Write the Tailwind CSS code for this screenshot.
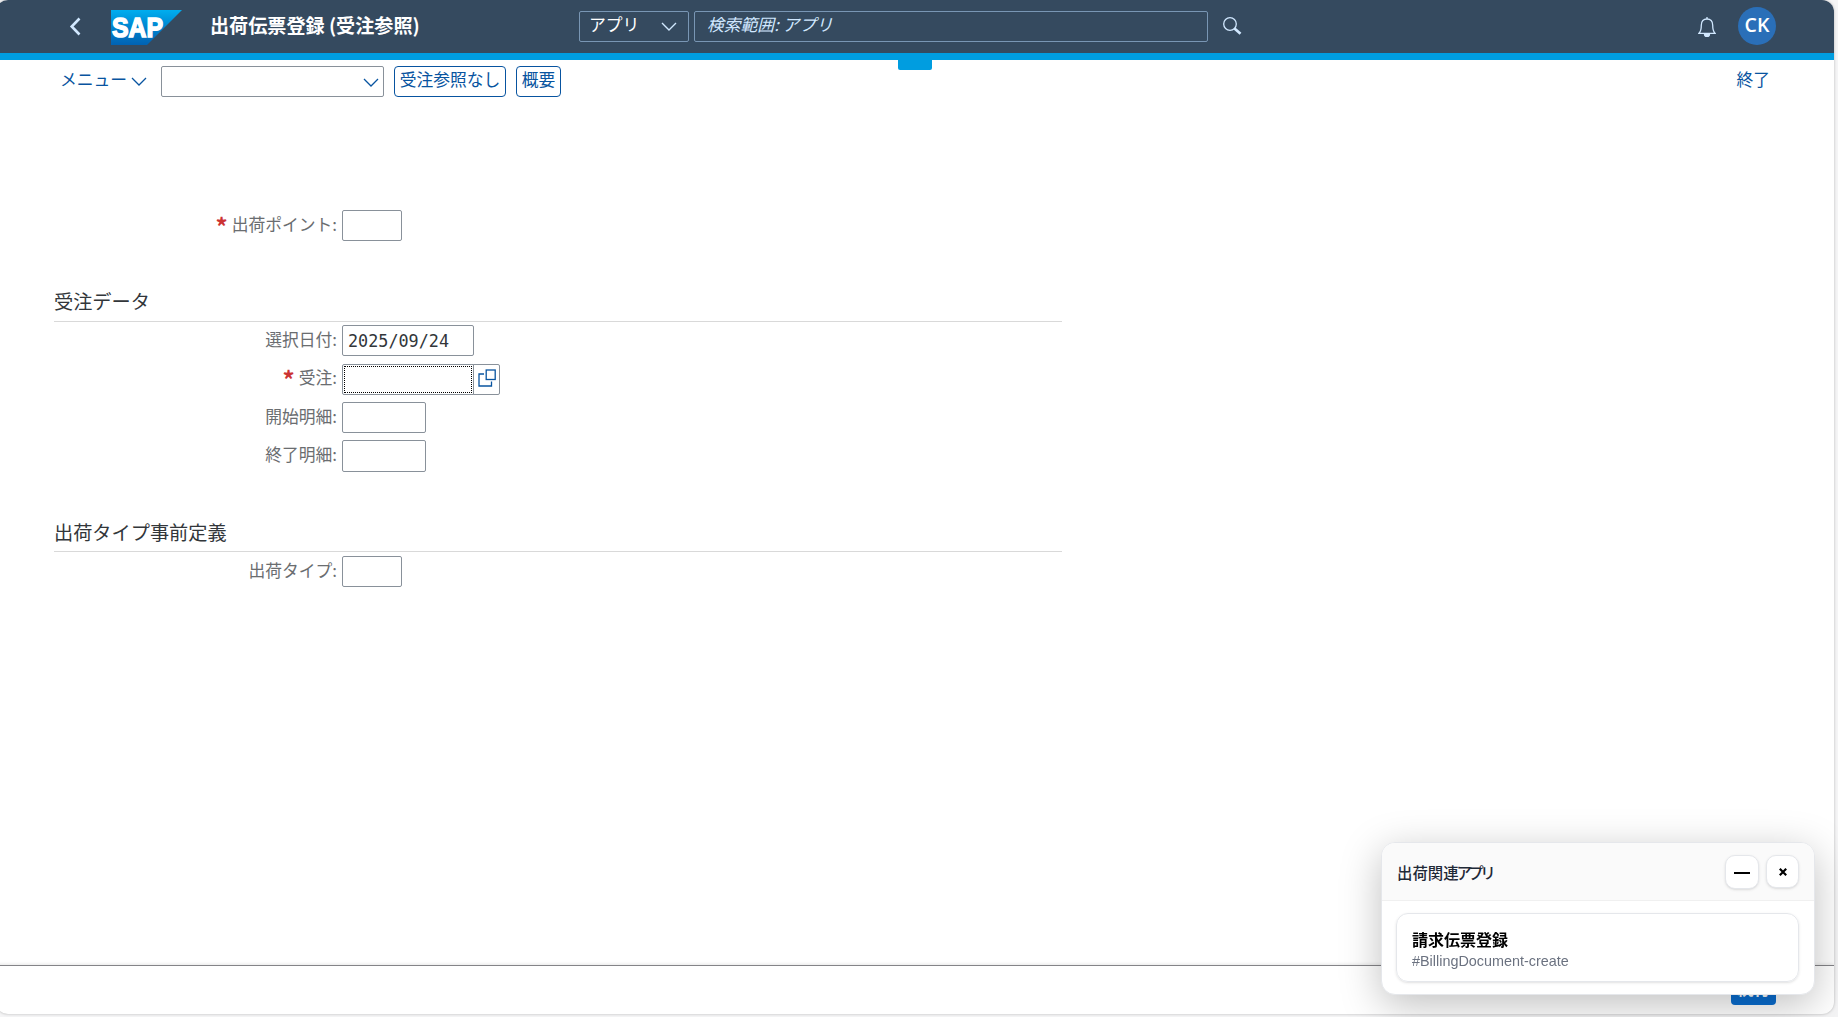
<!DOCTYPE html>
<html lang="ja">
<head>
<meta charset="utf-8">
<title>出荷伝票登録 (受注参照)</title>
<script src="https://cdn.jsdelivr.net/npm/@tailwindcss/browser@4"></script>
</head>
<body class="h-[1017px] overflow-hidden bg-[#f5f5f6] font-['Noto_Sans_CJK_JP',sans-serif] text-[16.8px] leading-6 text-[#32363a]">
<div class="-ml-[4px] flex h-[1014px] w-[1838px] flex-col overflow-hidden rounded-xl bg-white shadow-[0_0_3px_rgba(0,0,0,0.25)]">

  <header class="flex h-[60px] shrink-0 items-start border-b-[7px] border-[#009de0] bg-[#354a5f] pl-[73px] pr-[58px]">
    <svg class="mt-[17px] h-[19px] w-[13px]" viewBox="0 0 13 19" fill="none" stroke="#d1e8ff" stroke-width="2.6"><path d="M10.500 1.500 2.700 9.500l7.800 8"/></svg>
    <svg class="ml-[29px] mt-[10px] h-[35px] w-[71px]" viewBox="0 0 71 35">
      <defs><linearGradient id="g" x1="0" y1="0" x2="0" y2="1"><stop offset="0" stop-color="#00aeef"/><stop offset="0.5" stop-color="#0084cf"/><stop offset="1" stop-color="#0062b3"/></linearGradient></defs>
      <path fill="url(#g)" d="M0 0h71L36 35H0z"/>
      <text x="1" y="27" textLength="51" lengthAdjust="spacingAndGlyphs" font-family="Liberation Sans" font-weight="700" font-size="28" fill="#fff" stroke="#fff" stroke-width="1.600">SAP</text>
    </svg>
    <h1 class="ml-[28px] mt-[13px] w-[369px] whitespace-nowrap text-[19.1px] font-bold leading-6 text-white">出荷伝票登録 (受注参照)</h1>
    <div class="mt-[11px] flex h-[31px] w-[110px] items-start justify-between rounded-[2px] border border-[#7996b4] pl-[9px] pr-[11px] text-white">
      <span>アプリ</span>
      <svg class="mt-[10px] h-[10px] w-[16px]" viewBox="0 0 16 10" fill="none" stroke="#d1e8ff" stroke-width="1.4"><path d="m1 1 7 7 7-7"/></svg>
    </div>
    <div class="ml-[5px] mt-[11px] h-[31px] w-[514px] rounded-[2px] border border-[#7996b4] pl-[12px] italic text-[#d1e8ff]">検索範囲: アプリ</div>
    <svg class="ml-[15px] mt-[17px] h-[18px] w-[19px]" viewBox="0 0 19 18" fill="none" stroke="#d1e8ff"><circle cx="7" cy="7" r="6.300" stroke-width="1.3"/><path d="m11.500 11.500 6 5.300" stroke-width="2.700"/></svg>
    <svg class="ml-auto mt-[17px] h-[20px] w-[18px]" viewBox="0 0 18 20" fill="none" stroke="#d1e8ff" stroke-width="1.3"><path d="M1 16.300c2-2 2.300-4 2.300-8C3.300 4 5.500 2 9 2s5.700 2 5.700 6.300c0 4 .3 6 2.300 8z"/><path d="M9 0v2"/><path d="M6.500 17.300a2.500 2.300 0 0 0 5 0z" fill="#d1e8ff"/></svg>
    <div class="ml-[22px] mt-[7px] flex size-[38px] items-center justify-center rounded-full bg-[#2a6fb8] pb-[2px] font-['Open_Sans',sans-serif] text-[19.5px] font-semibold text-white">CK</div>
  </header>

  <div class="flex h-[37px] shrink-0 items-start pl-[64px] pr-[64px] text-[#0854a0]">
    <span class="mt-[7px] w-[67px] whitespace-nowrap">メニュー</span>
    <svg class="ml-[4px] mt-[17px] h-[9px] w-[16px]" viewBox="0 0 16 9" fill="none" stroke="currentColor" stroke-width="1.3"><path d="m1 1 7 7 7-7"/></svg>
    <div class="ml-[14px] mt-[6px] flex h-[31px] w-[223px] justify-end rounded-[2px] border border-[#89919a] pr-[4px] pt-[11px]">
      <svg class="h-[10px] w-[16px]" viewBox="0 0 16 10" fill="none" stroke="currentColor" stroke-width="1.3"><path d="m1 1 7 7 7-7"/></svg>
    </div>
    <button class="ml-[10px] mt-[6px] flex h-[31px] w-[112px] justify-center whitespace-nowrap rounded-[4px] border border-[#0854a0] leading-6">受注参照なし</button>
    <button class="ml-[10px] mt-[6px] flex h-[31px] w-[45px] justify-center whitespace-nowrap rounded-[4px] border border-[#0854a0] leading-6">概要</button>
    <div class="ml-[337px] h-[10px] w-[34px] rounded-b-[2px] bg-[#009de0]"></div>
    <span class="ml-auto mt-[7px]">終了</span>
  </div>

  <main class="flex w-[1066px] grow flex-col pl-[58px] text-[#6a6d70]">
    <div class="mt-[113px] flex h-[31px]"><div class="mr-[5px] flex w-[283px] justify-end pt-[2px]"><span class="mr-[4px] mt-[4px] text-[24px] font-bold leading-5 text-[#c33]">*</span>出荷ポイント:</div><div class="w-[60px] rounded-[2px] border border-[#89919a]"></div></div>

    <h2 class="mt-[46px] h-[35px] border-b border-[#d9d9d9] pt-[2px] text-[19.2px] text-[#32363a]">受注データ</h2>
    <div class="mt-[3px] flex h-[31px]"><div class="mr-[5px] w-[283px] pt-[2px] text-right">選択日付:</div><div class="w-[132px] rounded-[2px] border border-[#89919a] pl-[5px] pt-[3px] font-['DejaVu_Sans_Mono',monospace] text-[16.8px] text-[#32363a]">2025/09/24</div></div>
    <div class="mt-[8px] flex h-[31px]"><div class="mr-[5px] flex w-[283px] justify-end pt-px"><span class="mr-[4px] mt-[4px] text-[24px] font-bold leading-5 text-[#c33]">*</span>受注:</div><div class="w-[132px] rounded-l-[2px] border border-[#89919a] p-px"><div class="h-full border border-dotted border-black"></div></div><div class="-ml-px flex w-[27px] rounded-r-[2px] border border-[#89919a] pl-[4px] pt-[4px]"><svg class="h-[18px] w-[18px]" viewBox="0 0 18 18" fill="none" stroke="#0854a0" stroke-width="1.3"><rect x="8.200" y="1" width="9" height="9.500"/><path d="M6 5H1v12h12.500v-4.500"/></svg></div></div>
    <div class="mt-[7px] flex h-[31px]"><div class="mr-[5px] w-[283px] pt-[2px] text-right">開始明細:</div><div class="w-[84px] rounded-[2px] border border-[#89919a]"></div></div>
    <div class="mt-[7px] flex h-[32px]"><div class="mr-[5px] w-[283px] pt-[2px] text-right">終了明細:</div><div class="w-[84px] rounded-[2px] border border-[#89919a]"></div></div>

    <h2 class="mt-[45px] h-[35px] border-b border-[#d9d9d9] pt-[3px] text-[19.2px] text-[#32363a]">出荷タイプ事前定義</h2>
    <div class="mt-[4px] flex h-[31px]"><div class="mr-[5px] w-[283px] pt-[2px] text-right">出荷タイプ:</div><div class="w-[60px] rounded-[2px] border border-[#89919a]"></div></div>
  </main>

  <footer class="flex h-[49px] shrink-0 items-start justify-end border-t border-[#848488] pr-[58px] pt-[8px] shadow-[0_0_4px_rgba(0,0,0,0.15)]">
    <button class="flex h-[31px] w-[45px] justify-center rounded-[4px] bg-[#0a6ed1] font-bold leading-7 text-white">続行</button>
  </footer>
</div>

<aside class="fixed left-[1381px] top-[842px] flex h-[153px] w-[434px] flex-col overflow-hidden rounded-[14px] border border-[#e5e7eb] bg-white shadow-[0_10px_40px_rgba(0,0,0,0.25)]">
  <div class="flex h-[58px] shrink-0 items-center border-b border-[#f0f0f0] bg-[#fafafa] pl-[15px] pr-[15px]">
    <span class="whitespace-nowrap text-[15.4px] font-medium text-[#1f2937]">出荷関連<span class="-ml-[2px] tracking-[-3.6px]">アプリ</span></span>
    <button class="ml-auto flex size-[34px] items-center justify-center rounded-[10px] border border-[#e5e7eb] bg-white shadow-sm"><span class="mt-[3px] h-[2px] w-4 bg-black"></span></button>
    <button class="ml-[7px] flex size-[33px] items-center justify-center rounded-[10px] border border-[#e5e7eb] bg-white shadow-sm"><svg class="size-2" viewBox="0 0 8 8" stroke="#000" stroke-width="2.200"><path d="m.8.8 6.400 6.400M7.200.8.8 7.200"/></svg></button>
  </div>
  <div class="ml-[14px] mt-[12px] flex h-[69px] w-[403px] flex-col rounded-xl border border-[#e5e7eb] pl-[15px] pt-[13px] shadow-sm">
    <span class="text-base font-bold leading-6 text-black">請求伝票登録</span>
    <span class="font-['Liberation_Sans',sans-serif] text-[14.4px] leading-[21px] text-[#6b7280]">#BillingDocument-create</span>
  </div>
</aside>
</body>
</html>
